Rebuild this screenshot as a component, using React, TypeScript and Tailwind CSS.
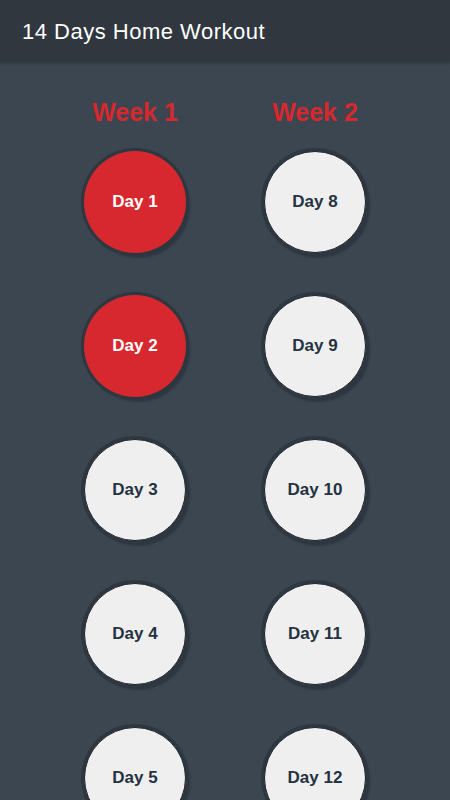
const weeks = [
  { title: 'Week 1', days: [1, 2, 3, 4, 5, 6, 7] },
  { title: 'Week 2', days: [8, 9, 10, 11, 12, 13, 14] },
]

const doneDays = [1, 2]

export default function App() {
  return (
    <div className="h-[800px] overflow-hidden bg-[#3b4650]" style={{ fontFamily: '"Liberation Sans", Arial, sans-serif' }}>
      {/* Header */}
      <header className="h-[62px] bg-[#30373f] flex items-center px-[22px] shadow-[0_1px_3px_rgba(0,0,0,0.25)]">
        <h1 className="text-white text-[22px] tracking-[0.5px]">14 Days Home Workout</h1>
      </header>

      {/* Weeks */}
      <main className="pl-[45px] grid grid-cols-[180px_180px]">
        {weeks.map((week) => (
          <div key={week.title} className="flex flex-col items-center">
            <h2 className="mt-[35px] text-[25px] leading-[30px] font-bold text-[#d6282e]">{week.title}</h2>
            <div className="mt-[24px] flex flex-col items-center gap-[42px]">
              {week.days.map((day) => (
                <DayButton key={day} day={day} done={doneDays.includes(day)} />
              ))}
            </div>
          </div>
        ))}
      </main>
    </div>
  )
}

function DayButton({ day, done }: { day: number; done: boolean }) {
  return (
    <button
      className={`w-[102px] h-[102px] rounded-full flex items-center justify-center text-[17px] font-bold shadow-[0_0_0_3px_#2e3740,3px_4px_2px_1px_#2e3740] ${
        done ? 'bg-[#d6282e] text-white' : 'bg-[#efefef] text-[#253241] border border-[#1c232a]'
      }`}
    >
      Day {day}
    </button>
  )
}
